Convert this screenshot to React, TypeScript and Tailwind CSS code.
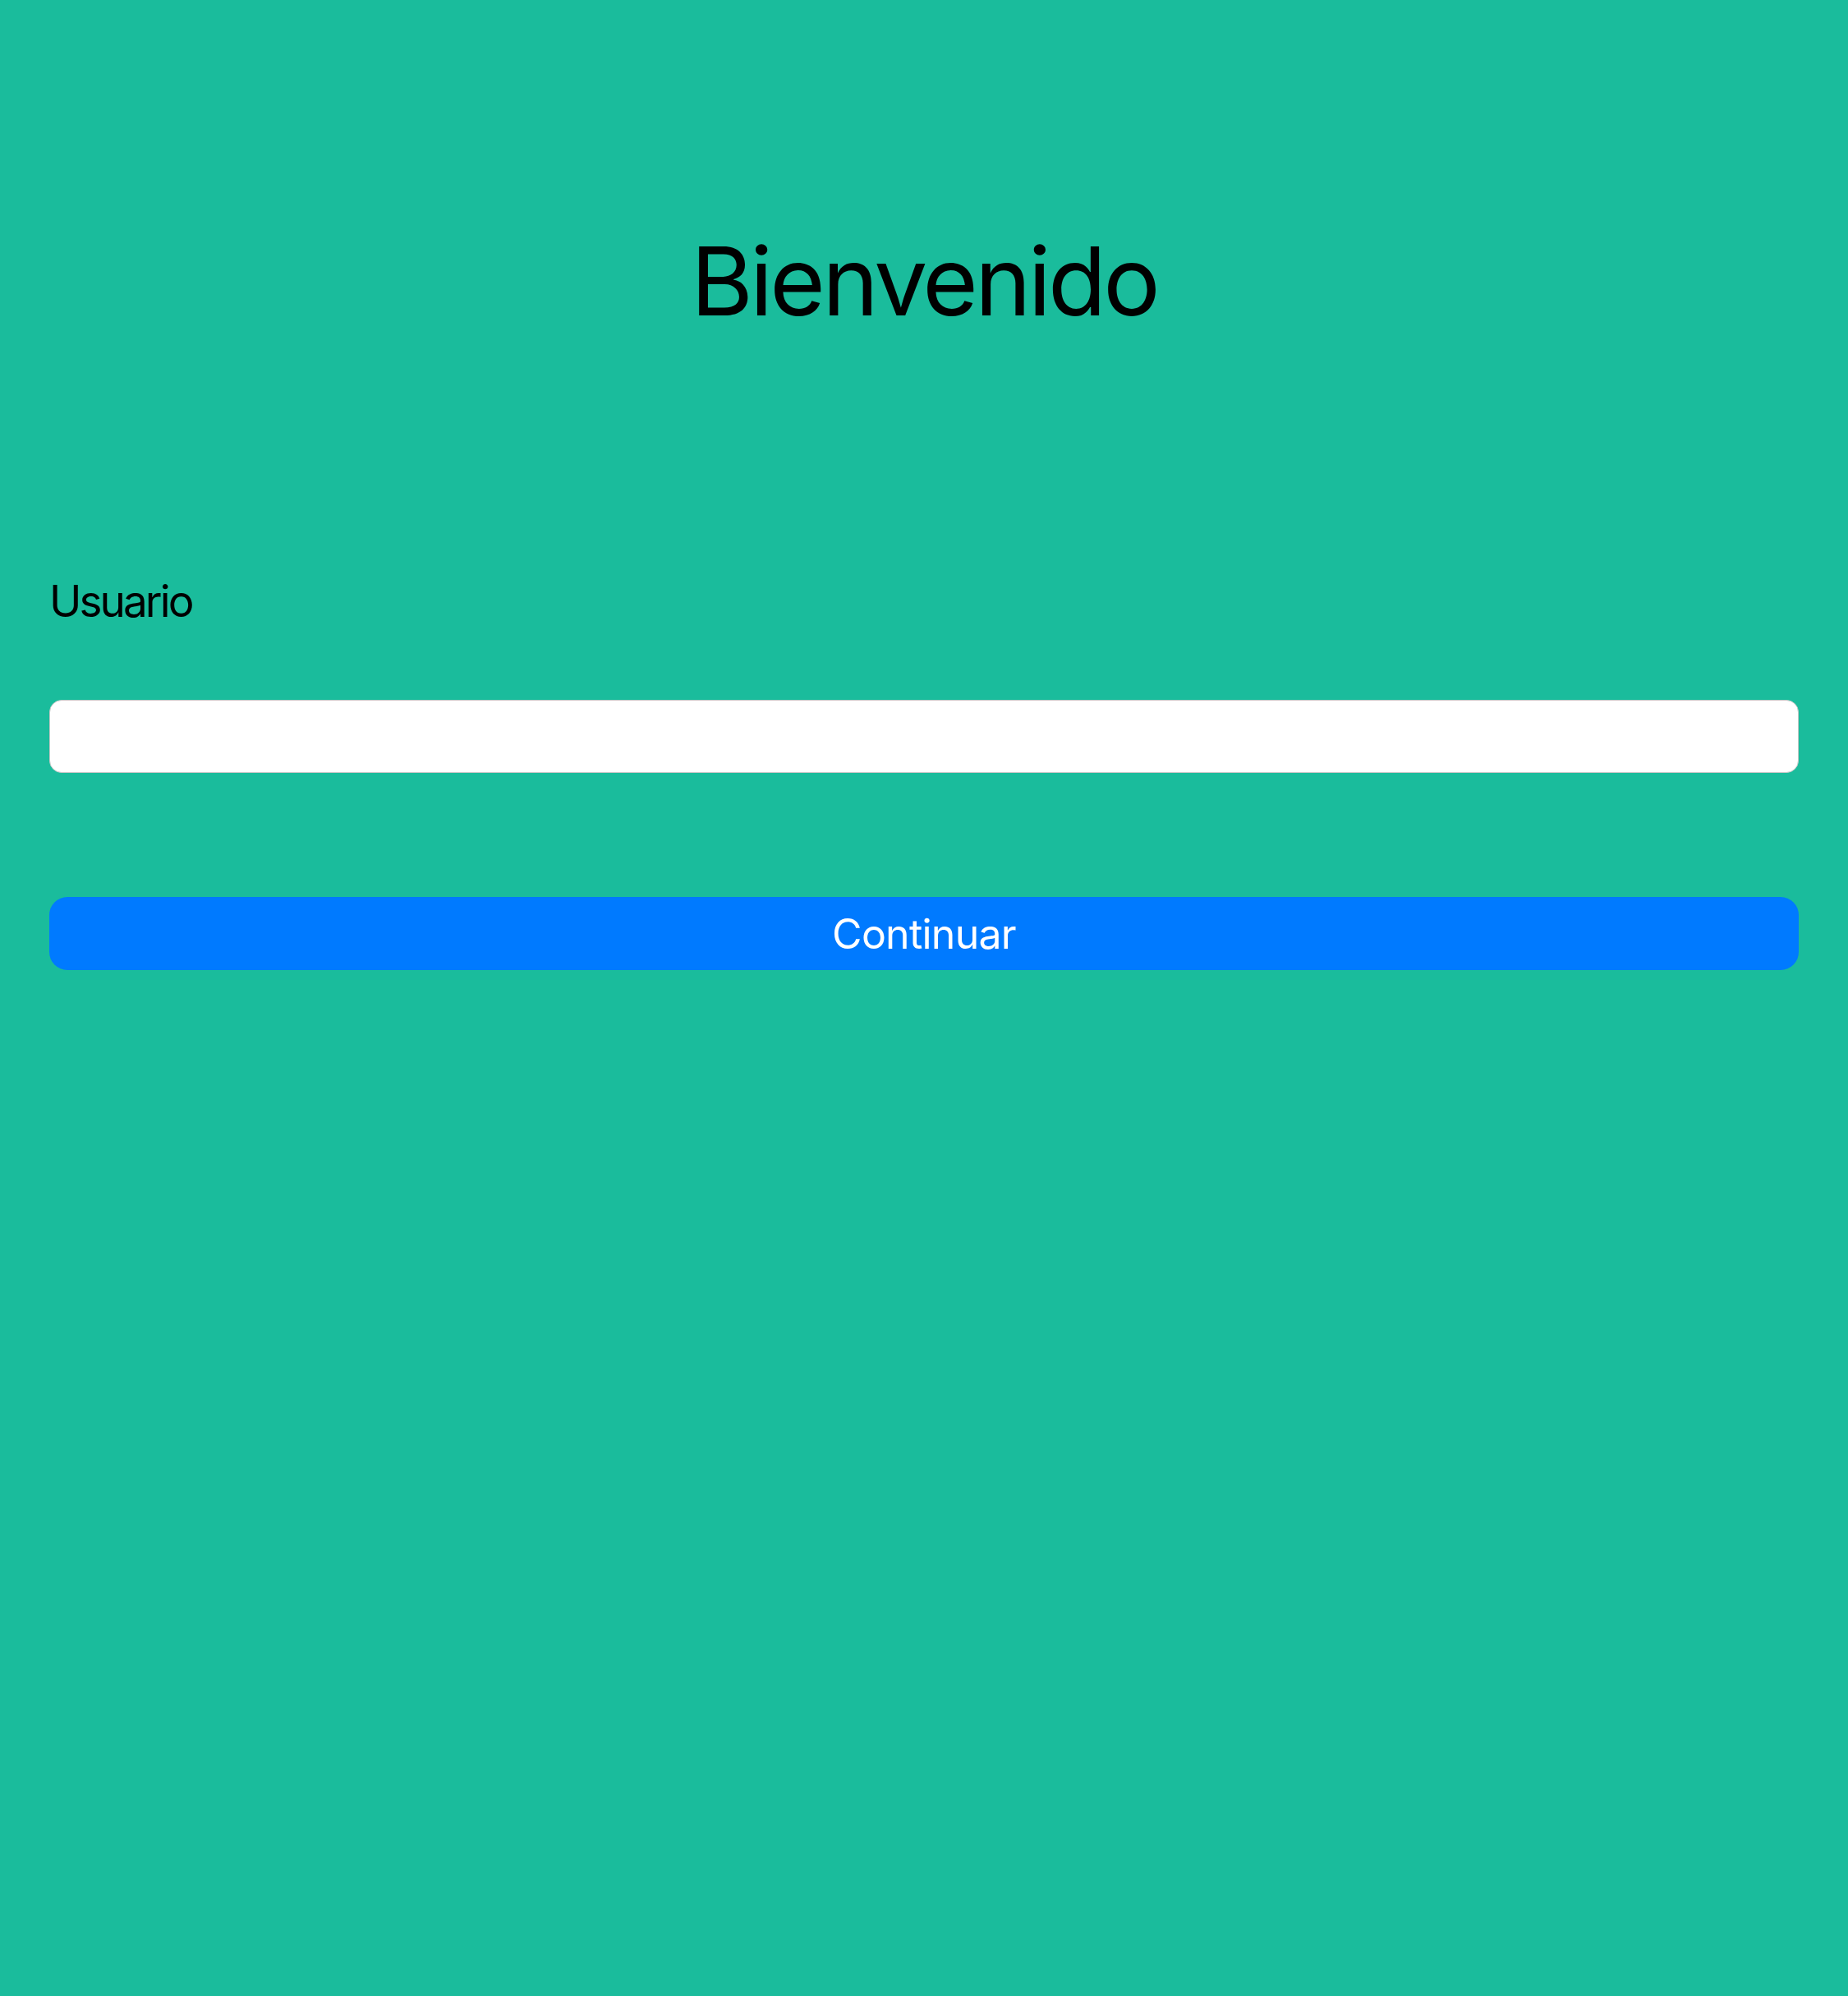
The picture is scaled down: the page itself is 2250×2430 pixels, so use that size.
export default function App() {
  return (
    <div
      className="min-h-[2430px] w-full bg-[#1abc9c] px-[60px]"
      style={{ fontFamily: 'Inter, "Noto Sans", sans-serif' }}
    >
      {/* ── Title ───────────────────────────── */}
      <div className="pt-[284px] flex justify-center">
        <h1 className="text-[116px] leading-none tracking-[-0.033em] text-black">
          Bienvenido
        </h1>
      </div>

      {/* ── Form ────────────────────────────── */}
      <form className="mt-[306px] flex flex-col" onSubmit={(e) => e.preventDefault()}>
        <label htmlFor="usuario" className="text-[53px] leading-none tracking-[-0.055em] text-black">
          Usuario
        </label>
        <input
          id="usuario"
          type="text"
          className="mt-[93px] h-[89px] w-full rounded-[15px] border border-[#c7c7c7] bg-white px-5 text-[44px] outline-none"
        />
        <button
          type="submit"
          className="mt-[151px] flex h-[89px] w-full items-center justify-center rounded-[22px] bg-[#007aff] text-[50px] leading-none tracking-[-0.015em] text-white"
        >
          Continuar
        </button>
      </form>
    </div>
  );
}
